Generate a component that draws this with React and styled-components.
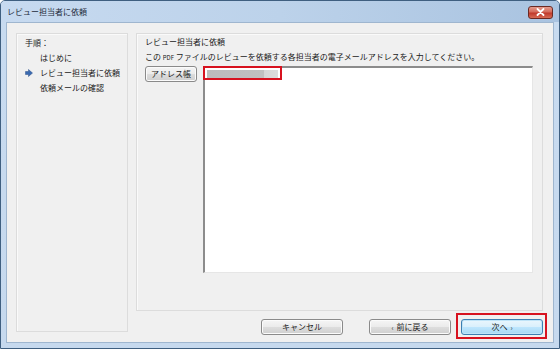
import React from "react";
import styled, { createGlobalStyle } from "styled-components";

const Global = createGlobalStyle`
  html, body { margin: 0; padding: 0; background: #fff; }
  body { font-family: "Noto Sans CJK JP", "Noto Sans", sans-serif; }
`;

const Window = styled.div`
  width: 560px;
  height: 349px;
  box-sizing: border-box;
  border: 1px solid #3f5f80;
  border-radius: 5px 5px 0 0;
  background: linear-gradient(to bottom, #bcd3eb 0px, #c8dbf0 22px, #c6d9ee 100%);
  display: flex;
  flex-direction: column;
  overflow: hidden;
`;

const TitleBar = styled.div`
  height: 21px;
  flex: none;
  display: flex;
  align-items: center;
  justify-content: space-between;
  padding: 0 6px 0 6px;
  background: linear-gradient(to right, #c7daf0 0%, #bcd2ea 50%, #a9c3e0 100%);
`;

const Title = styled.span`
  font-size: 8px;
  color: #1e2b3c;
`;

const CloseButton = styled.div`
  width: 25px;
  height: 13px;
  box-sizing: border-box;
  margin-top: 1px;
  border: 1px solid #6b2a24;
  border-radius: 3px;
  background: linear-gradient(to bottom, #e49c8f 0%, #d46a5a 45%, #c0392b 55%, #d66b55 100%);
  display: flex;
  align-items: center;
  justify-content: center;
`;

const Client = styled.div`
  flex: 1;
  margin: 0 5px 5px 5px;
  background: #f0f0f0;
  border: 1px solid #9fb6cf;
  display: grid;
  grid-template-columns: 112px 1fr;
  column-gap: 8px;
  padding: 10px 10px 10px 9px;
`;

const Panel = styled.div`
  box-sizing: border-box;
  border: 1px solid #dcdcdc;
  box-shadow: inset 1px 1px 0 #fafafa;
`;

const StepsPanel = styled(Panel)`
  padding: 2px 0 0 8px;
  display: flex;
  flex-direction: column;
`;

const StepsLabel = styled.div`
  font-size: 8px;
  height: 14px;
  line-height: 14px;
  color: #1a1a1a;
`;

const StepItem = styled.div`
  font-size: 8px;
  height: 15px;
  line-height: 15px;
  color: #1a1a1a;
  display: flex;
  align-items: center;
`;

const ArrowSlot = styled.span`
  width: 15px;
  height: 15px;
  display: inline-flex;
  align-items: center;
  justify-content: flex-start;
`;

const RightColumn = styled.div`
  display: flex;
  flex-direction: column;
  margin-bottom: -3px;
`;

const MainPanel = styled(Panel)`
  flex: 1;
  padding: 0 9px 37px 8px;
  display: flex;
  flex-direction: column;
`;

const SectionTitle = styled.div`
  font-size: 8px;
  height: 15px;
  line-height: 15px;
  color: #1a1a1a;
`;

const Description = styled.div`
  font-size: 8px;
  height: 17px;
  line-height: 15px;
  color: #1a1a1a;
  white-space: nowrap;
`;

const Small = styled.span`
  font-size: 6px;
`;

const EntryRow = styled.div`
  flex: 1;
  display: flex;
  gap: 6px;
  align-items: flex-start;
`;

const Button = styled.button`
  box-sizing: border-box;
  width: ${(p) => p.$w || 82}px;
  height: 16px;
  padding: 0;
  font-family: inherit;
  font-size: 8px;
  color: #1a1a1a;
  border: 1px solid ${(p) => (p.$default ? "#3c7fb1" : "#8a8a8a")};
  border-radius: 3px;
  background: ${(p) =>
    p.$default
      ? "linear-gradient(to bottom, #eaf6fd 0%, #d9f0fc 50%, #bee6fd 51%, #a7d9f5 100%)"
      : "linear-gradient(to bottom, #f5f5f5 0%, #ebebeb 50%, #dddddd 51%, #cfcfcf 100%)"};
  box-shadow: inset 0 0 0 1px ${(p) => (p.$default ? "#bfe4f8" : "#fbfbfb")};
  display: flex;
  align-items: center;
  justify-content: center;
  gap: 3px;
  line-height: 1;
`;

const Chevron = styled.span`
  font-size: 7px;
  color: #333;
`;

const AddressList = styled.div`
  flex: 1;
  align-self: stretch;
  box-sizing: border-box;
  background: #fff;
  border-top: 2px solid #8c8c8c;
  border-left: 2px solid #8c8c8c;
  border-right: 1px solid #e6e6e6;
  border-bottom: 1px solid #e6e6e6;
  position: relative;
`;

const Highlight = styled.div`
  position: absolute;
  left: -2px;
  top: -2px;
  width: 79px;
  height: 14px;
  box-sizing: border-box;
  border: 2px solid #d7121f;
  padding: 2px 2px;
  display: flex;
`;

const BlurBar = styled.div`
  flex: 1;
  height: 8px;
  background: linear-gradient(to right, #bcbcbc 0%, #c0c0c0 80%, #d6d6d6 81%, #dcdcdc 100%);
`;

const Footer = styled.div`
  height: 24px;
  flex: none;
  display: flex;
  align-items: flex-end;
  justify-content: flex-end;
  gap: 10px;
`;

const Spacer = styled.div`
  width: 6px;
`;

const Outlined = styled.div`
  position: relative;
  display: flex;
`;

const RedFrame = styled.div`
  position: absolute;
  left: -5px;
  top: -6px;
  right: -4px;
  bottom: -4px;
  border: 2px solid #d7121f;
  pointer-events: none;
`;

export default function App() {
  return (
    <>
      <Global />
      <Window>
        <TitleBar>
          <Title>レビュー担当者に依頼</Title>
          <CloseButton>
            <svg width="9" height="8" viewBox="0 0 9 8">
              <path d="M1.5 1 L7.5 7 M7.5 1 L1.5 7" stroke="#fff" strokeWidth="1.8" strokeLinecap="round" />
            </svg>
          </CloseButton>
        </TitleBar>
        <Client>
          <StepsPanel>
            <StepsLabel>手順：</StepsLabel>
            <StepItem>
              <ArrowSlot />
              はじめに
            </StepItem>
            <StepItem>
              <ArrowSlot>
                <svg width="8" height="8" viewBox="0 0 8 8">
                  <path d="M0.5 2.5 H3.5 V0.5 L7.5 4 L3.5 7.5 V5.5 H0.5 Z" fill="#3a6ab0" stroke="#2a4f8a" strokeWidth="0.5" />
                </svg>
              </ArrowSlot>
              レビュー担当者に依頼
            </StepItem>
            <StepItem>
              <ArrowSlot />
              依頼メールの確認
            </StepItem>
          </StepsPanel>
          <RightColumn>
            <MainPanel>
              <SectionTitle>レビュー担当者に依頼</SectionTitle>
              <Description>
                この <Small>PDF</Small> ファイルのレビューを依頼する各担当者の電子メールアドレスを入力してください。
              </Description>
              <EntryRow>
                <Button $w={52}>アドレス帳</Button>
                <AddressList>
                  <Highlight>
                    <BlurBar />
                  </Highlight>
                </AddressList>
              </EntryRow>
            </MainPanel>
            <Footer>
              <Button>キャンセル</Button>
              <Spacer />
              <Button>
                <Chevron>‹</Chevron>前に戻る
              </Button>
              <Outlined>
                <Button $default>
                  次へ<Chevron>›</Chevron>
                </Button>
                <RedFrame />
              </Outlined>
            </Footer>
          </RightColumn>
        </Client>
      </Window>
    </>
  );
}
